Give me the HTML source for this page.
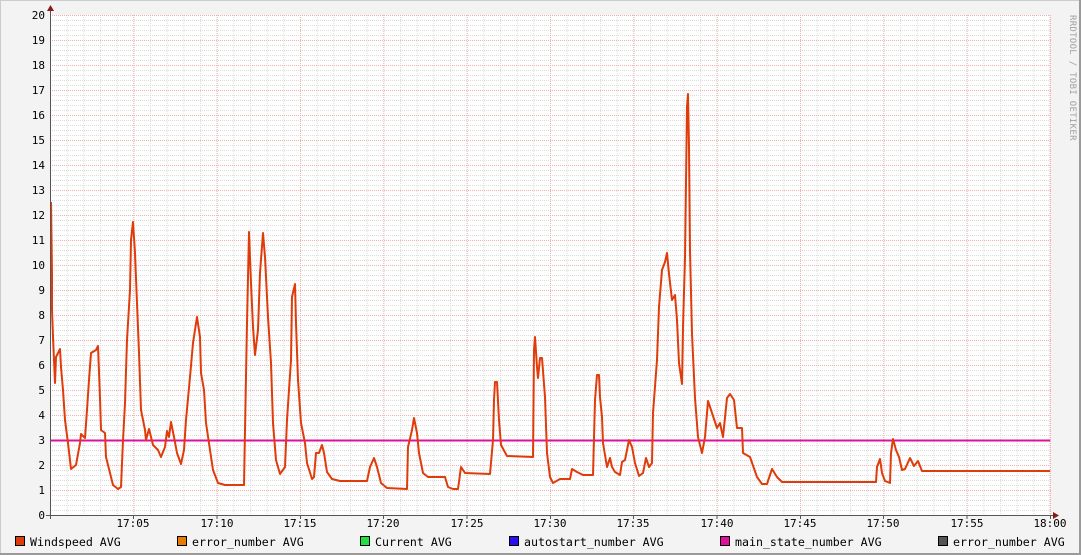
<!DOCTYPE html>
<html><head><meta charset="utf-8"><style>
html,body{margin:0;padding:0;background:#f3f3f3;}
svg{display:block;font-family:"DejaVu Sans Mono","Liberation Mono",monospace;}
</style></head><body>
<svg width="1081" height="555" viewBox="0 0 1081 555" xmlns="http://www.w3.org/2000/svg">
<defs>
<pattern id="hmin" patternUnits="userSpaceOnUse" x="50" y="15" width="1000" height="5"><line x1="0" y1="0.5" x2="1000" y2="0.5" stroke="#dcdcdc" stroke-dasharray="1,1"/></pattern>
<pattern id="vmin" patternUnits="userSpaceOnUse" x="50" y="15" width="16.6667" height="500"><line x1="0.5" y1="0" x2="0.5" y2="500" stroke="#dcdcdc" stroke-dasharray="1,1"/></pattern>
<pattern id="hmaj" patternUnits="userSpaceOnUse" x="50" y="15" width="1000" height="25"><line x1="0" y1="0.5" x2="1000" y2="0.5" stroke="#f0b0b0" stroke-dasharray="1,1"/></pattern>
<pattern id="vmaj" patternUnits="userSpaceOnUse" x="50" y="15" width="83.3333" height="500"><line x1="0.5" y1="0" x2="0.5" y2="500" stroke="#f0b0b0" stroke-dasharray="1,1"/></pattern>
</defs>
<rect x="0" y="0" width="1081" height="555" fill="#f3f3f3"/>
<rect x="0" y="0" width="1081" height="1" fill="#cccccc"/>
<rect x="0" y="0" width="1" height="555" fill="#cccccc"/>
<rect x="1079" y="0" width="2" height="555" fill="#9a9a9a"/>
<rect x="0" y="553" width="1081" height="2" fill="#9a9a9a"/>
<rect x="50" y="15" width="1000" height="500" fill="#ffffff"/>
<rect x="50" y="15" width="1001" height="500" fill="url(#hmin)"/>
<rect x="50" y="15" width="1001" height="500" fill="url(#vmin)"/>
<rect x="50" y="15" width="1001" height="500" fill="url(#hmaj)"/>
<rect x="50" y="15" width="1001" height="500" fill="url(#vmaj)"/>

<g font-size="11" fill="#000" text-anchor="end">
<text x="45" y="19">20</text><text x="45" y="44">19</text><text x="45" y="69">18</text><text x="45" y="94">17</text>
<text x="45" y="119">16</text><text x="45" y="144">15</text><text x="45" y="169">14</text><text x="45" y="194">13</text>
<text x="45" y="219">12</text><text x="45" y="244">11</text><text x="45" y="269">10</text><text x="45" y="294">9</text>
<text x="45" y="319">8</text><text x="45" y="344">7</text><text x="45" y="369">6</text><text x="45" y="394">5</text>
<text x="45" y="419">4</text><text x="45" y="444">3</text><text x="45" y="469">2</text><text x="45" y="494">1</text>
<text x="45" y="519">0</text>
</g>
<g font-size="11" fill="#000" text-anchor="middle">
<text x="133" y="527">17:05</text><text x="217" y="527">17:10</text><text x="300" y="527">17:15</text>
<text x="383" y="527">17:20</text><text x="467" y="527">17:25</text><text x="550" y="527">17:30</text>
<text x="633" y="527">17:35</text><text x="717" y="527">17:40</text><text x="800" y="527">17:45</text>
<text x="883" y="527">17:50</text><text x="967" y="527">17:55</text><text x="1050" y="527">18:00</text>
</g>
<text x="1070" y="15" font-size="9" fill="#a0a0a0" transform="rotate(90 1070 15)" letter-spacing="0.3">RRDTOOL / TOBI OETIKER</text>

<line x1="50" y1="440.5" x2="1050" y2="440.5" stroke="#e0109c" stroke-width="2"/>
<polyline fill="none" stroke="#e03c0a" stroke-width="2" stroke-linejoin="round" points="
51,202 52,273 52,310 53,337 55,383 56,357 60,349 61,367 63,390 65,420 68,443 71,469 76,465 80,443 81,434 85,438 87,410 89,380 91,353 96,350 98,346 100,398 101,430 105,433 106,457 110,473 113,485 118,489 121,487 123,440 125,403 127,340 130,290 131,240 133,222 135,253 137,303 139,353 141,410 145,430 146,440 149,429 153,445 158,450 161,457 165,447 167,431 169,437 171,422 174,437 177,453 181,464 184,450 186,420 190,377 193,343 197,317 200,337 201,373 204,390 206,423 210,450 213,470 218,483 225,485 244,485 245,430 247,323 249,232 251,283 253,327 255,355 258,330 260,273 263,233 265,257 268,317 271,363 273,423 276,460 280,474 285,467 287,420 291,360 292,297 295,284 296,323 298,380 301,423 305,443 307,463 312,479 314,477 316,453 319,453 322,445 324,453 327,472 332,479 340,481 367,481 370,467 374,458 377,467 381,483 387,488 407,489 408,447 412,430 414,418 417,433 419,453 423,473 428,477 445,477 448,487 453,489 458,489 461,467 465,473 490,474 493,440 494,400 495,382 497,382 499,420 501,445 507,456 533,457 534,350 535,337 537,367 538,378 540,358 542,358 545,397 547,453 550,477 553,483 560,479 570,479 572,469 577,472 583,475 593,475 595,400 597,375 599,375 600,397 602,417 603,443 605,455 607,467 610,458 612,467 615,472 620,475 622,462 625,460 629,440 632,447 635,463 639,476 643,473 646,458 649,467 652,463 653,413 657,360 659,307 662,270 665,262 667,253 669,274 672,300 675,295 677,320 679,363 682,384 683,327 685,258 687,107 688,94 689,147 690,251 692,334 695,398 698,437 702,453 705,437 708,401 712,413 717,428 720,423 723,437 727,398 730,394 734,400 737,428 742,428 743,453 750,457 757,477 762,484 767,484 772,469 777,477 782,482 876,482 877,467 880,459 882,473 885,481 890,483 891,453 893,439 896,450 899,457 902,470 905,469 910,458 914,466 918,461 922,471 1050,471"/>

<line x1="50.5" y1="10" x2="50.5" y2="519" stroke="#555" stroke-width="1"/>
<polygon points="47,11 54,11 50.5,5" fill="#8b1a1a"/>
<line x1="46" y1="515.5" x2="1054" y2="515.5" stroke="#555" stroke-width="1"/>
<polygon points="1053,512 1053,519 1059,515.5" fill="#8b1a1a"/>
<g stroke="#555">
<line x1="133.5" y1="515" x2="133.5" y2="519"/><line x1="217" y1="515" x2="217" y2="519"/><line x1="300.5" y1="515" x2="300.5" y2="519"/>
<line x1="383.5" y1="515" x2="383.5" y2="519"/><line x1="467" y1="515" x2="467" y2="519"/><line x1="550.5" y1="515" x2="550.5" y2="519"/>
<line x1="633.5" y1="515" x2="633.5" y2="519"/><line x1="717" y1="515" x2="717" y2="519"/><line x1="800.5" y1="515" x2="800.5" y2="519"/>
<line x1="883.5" y1="515" x2="883.5" y2="519"/><line x1="967" y1="515" x2="967" y2="519"/><line x1="1050.5" y1="515" x2="1050.5" y2="519"/>
</g>

<g font-size="11.6" fill="#000">
<rect x="15.5" y="536.5" width="9" height="9" fill="#e03c0a" stroke="#000"/><text x="30" y="546">Windspeed AVG</text>
<rect x="177.5" y="536.5" width="9" height="9" fill="#e87a00" stroke="#000"/><text x="192" y="546">error_number AVG</text>
<rect x="360.5" y="536.5" width="9" height="9" fill="#22dd44" stroke="#000"/><text x="375" y="546">Current AVG</text>
<rect x="509.5" y="536.5" width="9" height="9" fill="#2a10f0" stroke="#000"/><text x="524" y="546">autostart_number AVG</text>
<rect x="720.5" y="536.5" width="9" height="9" fill="#e0109c" stroke="#000"/><text x="735" y="546">main_state_number AVG</text>
<rect x="938.5" y="536.5" width="9" height="9" fill="#555555" stroke="#000"/><text x="953" y="546">error_number AVG</text>
</g>
</svg>
</body></html>
